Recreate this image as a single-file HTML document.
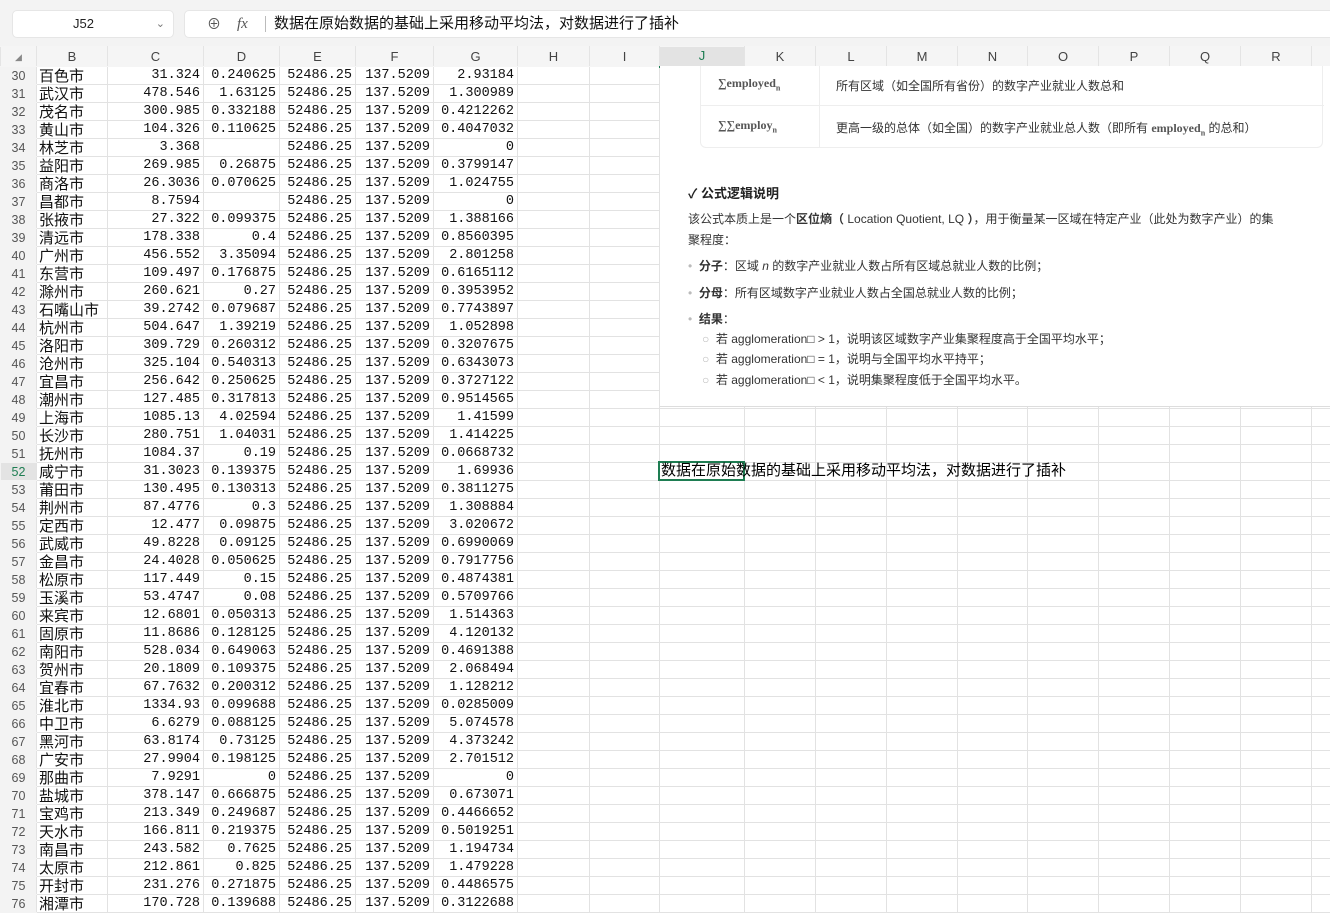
<!DOCTYPE html>
<html><head><meta charset="utf-8"><style>
*{margin:0;padding:0;box-sizing:border-box}
body{width:1330px;height:909px;overflow:hidden;background:#fff;font-family:"Liberation Sans","Noto Sans CJK SC",sans-serif;position:relative}
.top{position:absolute;left:0;top:0;width:1330px;height:46px;background:#f3f3f3}
.nb{position:absolute;left:12px;top:10px;width:162px;height:28px;background:#fff;border-radius:5px;border:1px solid #e6e6e6;font-size:13px;line-height:26px;padding-left:60px;color:#222}
.nb span{position:absolute;right:8px;top:0;color:#777;font-size:11px}
.fb{position:absolute;left:184px;top:10px;width:1160px;height:28px;background:#fff;border-radius:5px;border:1px solid #e6e6e6;font-size:15px;line-height:26px;color:#111}
table{position:absolute;left:0;top:46px;border-collapse:collapse;table-layout:fixed;width:1330px}
td{height:18px;border:1px solid #e2e2e2;font-family:"Liberation Mono","Noto Sans CJK SC",monospace;font-size:13.5px;text-align:right;padding:0 3px;white-space:nowrap;overflow:hidden;line-height:16px;color:#111}
tr.h td{height:20px;background:#f5f5f5;font-family:"Liberation Sans",sans-serif;font-size:13px;color:#444;text-align:center;border-color:#f5f5f5 #e4e4e4}
td.r{background:#f3f3f3;color:#555;text-align:center;font-family:"Liberation Sans",sans-serif;font-size:12.5px;border-color:#f3f3f3;border-right-color:#e2e2e2;padding:0}
td.b{text-align:left;font-family:"Noto Sans CJK SC",sans-serif;font-size:15px;padding-left:2px;line-height:16px}
.ov{position:absolute;left:660px;top:66px;width:670px;height:341px;background:#fff;border-bottom:1px solid #ddd;font-family:"Liberation Sans","Noto Sans CJK SC",sans-serif;color:#333}
.card{position:absolute;left:40px;top:0;width:623px;height:82px;border:1px solid #eee;border-top:none;border-radius:0 0 6px 6px}
.card .l{position:absolute;left:118px;top:0;width:1px;height:82px;background:#eee}
.card .m{position:absolute;left:0;top:39px;width:623px;height:1px;background:#eee}
.t{position:absolute;font-size:12px;white-space:nowrap}
.ser{font-family:"Liberation Serif",serif;font-weight:bold;color:#555}
.sel{position:absolute;left:658px;top:461px;width:87px;height:20px;border:2px solid #1e7d52}
.spill{position:absolute;left:661px;top:461px;font-size:15px;line-height:18px;white-space:nowrap;color:#000;font-family:"Noto Sans CJK SC",sans-serif}
</style></head><body>
<div class="top"></div>
<div class="nb">J52<span>&#8964;</span></div>
<div class="fb"><span style="position:absolute;left:22px;color:#555;font-size:14px">&#8853;</span><span style="position:absolute;left:52px;color:#555;font-style:italic;font-family:'Liberation Serif',serif">fx</span><span style="position:absolute;left:80px;top:5px;width:1px;height:16px;background:#bbb"></span><span style="position:absolute;left:89px">数据在原始数据的基础上采用移动平均法，对数据进行了插补</span></div>
<table>
<colgroup><col style="width:36px"><col style="width:71px"><col style="width:96px"><col style="width:76px"><col style="width:76px"><col style="width:78px"><col style="width:84px"><col style="width:72px"><col style="width:70px"><col style="width:85px"><col style="width:71px"><col style="width:71px"><col style="width:71px"><col style="width:70px"><col style="width:71px"><col style="width:71px"><col style="width:71px"><col style="width:71px"><col style="width:19px"></colgroup>
<tr class="h"><td style="color:#888;font-size:9px">&#9698;</td><td>B</td><td>C</td><td>D</td><td>E</td><td>F</td><td>G</td><td>H</td><td>I</td><td style="background:#e3e3e3;border-bottom:2px solid #1e7d52;color:#1e7d52">J</td><td>K</td><td>L</td><td>M</td><td>N</td><td>O</td><td>P</td><td>Q</td><td>R</td><td></td></tr>
<tr><td class="r">30</td><td class="b">百色市</td><td>31.324</td><td>0.240625</td><td>52486.25</td><td>137.5209</td><td>2.93184</td><td></td><td></td><td></td><td></td><td></td><td></td><td></td><td></td><td></td><td></td><td></td><td></td></tr>
<tr><td class="r">31</td><td class="b">武汉市</td><td>478.546</td><td>1.63125</td><td>52486.25</td><td>137.5209</td><td>1.300989</td><td></td><td></td><td></td><td></td><td></td><td></td><td></td><td></td><td></td><td></td><td></td><td></td></tr>
<tr><td class="r">32</td><td class="b">茂名市</td><td>300.985</td><td>0.332188</td><td>52486.25</td><td>137.5209</td><td>0.4212262</td><td></td><td></td><td></td><td></td><td></td><td></td><td></td><td></td><td></td><td></td><td></td><td></td></tr>
<tr><td class="r">33</td><td class="b">黄山市</td><td>104.326</td><td>0.110625</td><td>52486.25</td><td>137.5209</td><td>0.4047032</td><td></td><td></td><td></td><td></td><td></td><td></td><td></td><td></td><td></td><td></td><td></td><td></td></tr>
<tr><td class="r">34</td><td class="b">林芝市</td><td>3.368</td><td></td><td>52486.25</td><td>137.5209</td><td>0</td><td></td><td></td><td></td><td></td><td></td><td></td><td></td><td></td><td></td><td></td><td></td><td></td></tr>
<tr><td class="r">35</td><td class="b">益阳市</td><td>269.985</td><td>0.26875</td><td>52486.25</td><td>137.5209</td><td>0.3799147</td><td></td><td></td><td></td><td></td><td></td><td></td><td></td><td></td><td></td><td></td><td></td><td></td></tr>
<tr><td class="r">36</td><td class="b">商洛市</td><td>26.3036</td><td>0.070625</td><td>52486.25</td><td>137.5209</td><td>1.024755</td><td></td><td></td><td></td><td></td><td></td><td></td><td></td><td></td><td></td><td></td><td></td><td></td></tr>
<tr><td class="r">37</td><td class="b">昌都市</td><td>8.7594</td><td></td><td>52486.25</td><td>137.5209</td><td>0</td><td></td><td></td><td></td><td></td><td></td><td></td><td></td><td></td><td></td><td></td><td></td><td></td></tr>
<tr><td class="r">38</td><td class="b">张掖市</td><td>27.322</td><td>0.099375</td><td>52486.25</td><td>137.5209</td><td>1.388166</td><td></td><td></td><td></td><td></td><td></td><td></td><td></td><td></td><td></td><td></td><td></td><td></td></tr>
<tr><td class="r">39</td><td class="b">清远市</td><td>178.338</td><td>0.4</td><td>52486.25</td><td>137.5209</td><td>0.8560395</td><td></td><td></td><td></td><td></td><td></td><td></td><td></td><td></td><td></td><td></td><td></td><td></td></tr>
<tr><td class="r">40</td><td class="b">广州市</td><td>456.552</td><td>3.35094</td><td>52486.25</td><td>137.5209</td><td>2.801258</td><td></td><td></td><td></td><td></td><td></td><td></td><td></td><td></td><td></td><td></td><td></td><td></td></tr>
<tr><td class="r">41</td><td class="b">东营市</td><td>109.497</td><td>0.176875</td><td>52486.25</td><td>137.5209</td><td>0.6165112</td><td></td><td></td><td></td><td></td><td></td><td></td><td></td><td></td><td></td><td></td><td></td><td></td></tr>
<tr><td class="r">42</td><td class="b">滁州市</td><td>260.621</td><td>0.27</td><td>52486.25</td><td>137.5209</td><td>0.3953952</td><td></td><td></td><td></td><td></td><td></td><td></td><td></td><td></td><td></td><td></td><td></td><td></td></tr>
<tr><td class="r">43</td><td class="b">石嘴山市</td><td>39.2742</td><td>0.079687</td><td>52486.25</td><td>137.5209</td><td>0.7743897</td><td></td><td></td><td></td><td></td><td></td><td></td><td></td><td></td><td></td><td></td><td></td><td></td></tr>
<tr><td class="r">44</td><td class="b">杭州市</td><td>504.647</td><td>1.39219</td><td>52486.25</td><td>137.5209</td><td>1.052898</td><td></td><td></td><td></td><td></td><td></td><td></td><td></td><td></td><td></td><td></td><td></td><td></td></tr>
<tr><td class="r">45</td><td class="b">洛阳市</td><td>309.729</td><td>0.260312</td><td>52486.25</td><td>137.5209</td><td>0.3207675</td><td></td><td></td><td></td><td></td><td></td><td></td><td></td><td></td><td></td><td></td><td></td><td></td></tr>
<tr><td class="r">46</td><td class="b">沧州市</td><td>325.104</td><td>0.540313</td><td>52486.25</td><td>137.5209</td><td>0.6343073</td><td></td><td></td><td></td><td></td><td></td><td></td><td></td><td></td><td></td><td></td><td></td><td></td></tr>
<tr><td class="r">47</td><td class="b">宜昌市</td><td>256.642</td><td>0.250625</td><td>52486.25</td><td>137.5209</td><td>0.3727122</td><td></td><td></td><td></td><td></td><td></td><td></td><td></td><td></td><td></td><td></td><td></td><td></td></tr>
<tr><td class="r">48</td><td class="b">潮州市</td><td>127.485</td><td>0.317813</td><td>52486.25</td><td>137.5209</td><td>0.9514565</td><td></td><td></td><td></td><td></td><td></td><td></td><td></td><td></td><td></td><td></td><td></td><td></td></tr>
<tr><td class="r">49</td><td class="b">上海市</td><td>1085.13</td><td>4.02594</td><td>52486.25</td><td>137.5209</td><td>1.41599</td><td></td><td></td><td></td><td></td><td></td><td></td><td></td><td></td><td></td><td></td><td></td><td></td></tr>
<tr><td class="r">50</td><td class="b">长沙市</td><td>280.751</td><td>1.04031</td><td>52486.25</td><td>137.5209</td><td>1.414225</td><td></td><td></td><td></td><td></td><td></td><td></td><td></td><td></td><td></td><td></td><td></td><td></td></tr>
<tr><td class="r">51</td><td class="b">抚州市</td><td>1084.37</td><td>0.19</td><td>52486.25</td><td>137.5209</td><td>0.0668732</td><td></td><td></td><td></td><td></td><td></td><td></td><td></td><td></td><td></td><td></td><td></td><td></td></tr>
<tr><td class="r" style="background:#e3e3e3;color:#1e7d52">52</td><td class="b">咸宁市</td><td>31.3023</td><td>0.139375</td><td>52486.25</td><td>137.5209</td><td>1.69936</td><td></td><td></td><td></td><td></td><td></td><td></td><td></td><td></td><td></td><td></td><td></td><td></td></tr>
<tr><td class="r">53</td><td class="b">莆田市</td><td>130.495</td><td>0.130313</td><td>52486.25</td><td>137.5209</td><td>0.3811275</td><td></td><td></td><td></td><td></td><td></td><td></td><td></td><td></td><td></td><td></td><td></td><td></td></tr>
<tr><td class="r">54</td><td class="b">荆州市</td><td>87.4776</td><td>0.3</td><td>52486.25</td><td>137.5209</td><td>1.308884</td><td></td><td></td><td></td><td></td><td></td><td></td><td></td><td></td><td></td><td></td><td></td><td></td></tr>
<tr><td class="r">55</td><td class="b">定西市</td><td>12.477</td><td>0.09875</td><td>52486.25</td><td>137.5209</td><td>3.020672</td><td></td><td></td><td></td><td></td><td></td><td></td><td></td><td></td><td></td><td></td><td></td><td></td></tr>
<tr><td class="r">56</td><td class="b">武威市</td><td>49.8228</td><td>0.09125</td><td>52486.25</td><td>137.5209</td><td>0.6990069</td><td></td><td></td><td></td><td></td><td></td><td></td><td></td><td></td><td></td><td></td><td></td><td></td></tr>
<tr><td class="r">57</td><td class="b">金昌市</td><td>24.4028</td><td>0.050625</td><td>52486.25</td><td>137.5209</td><td>0.7917756</td><td></td><td></td><td></td><td></td><td></td><td></td><td></td><td></td><td></td><td></td><td></td><td></td></tr>
<tr><td class="r">58</td><td class="b">松原市</td><td>117.449</td><td>0.15</td><td>52486.25</td><td>137.5209</td><td>0.4874381</td><td></td><td></td><td></td><td></td><td></td><td></td><td></td><td></td><td></td><td></td><td></td><td></td></tr>
<tr><td class="r">59</td><td class="b">玉溪市</td><td>53.4747</td><td>0.08</td><td>52486.25</td><td>137.5209</td><td>0.5709766</td><td></td><td></td><td></td><td></td><td></td><td></td><td></td><td></td><td></td><td></td><td></td><td></td></tr>
<tr><td class="r">60</td><td class="b">来宾市</td><td>12.6801</td><td>0.050313</td><td>52486.25</td><td>137.5209</td><td>1.514363</td><td></td><td></td><td></td><td></td><td></td><td></td><td></td><td></td><td></td><td></td><td></td><td></td></tr>
<tr><td class="r">61</td><td class="b">固原市</td><td>11.8686</td><td>0.128125</td><td>52486.25</td><td>137.5209</td><td>4.120132</td><td></td><td></td><td></td><td></td><td></td><td></td><td></td><td></td><td></td><td></td><td></td><td></td></tr>
<tr><td class="r">62</td><td class="b">南阳市</td><td>528.034</td><td>0.649063</td><td>52486.25</td><td>137.5209</td><td>0.4691388</td><td></td><td></td><td></td><td></td><td></td><td></td><td></td><td></td><td></td><td></td><td></td><td></td></tr>
<tr><td class="r">63</td><td class="b">贺州市</td><td>20.1809</td><td>0.109375</td><td>52486.25</td><td>137.5209</td><td>2.068494</td><td></td><td></td><td></td><td></td><td></td><td></td><td></td><td></td><td></td><td></td><td></td><td></td></tr>
<tr><td class="r">64</td><td class="b">宜春市</td><td>67.7632</td><td>0.200312</td><td>52486.25</td><td>137.5209</td><td>1.128212</td><td></td><td></td><td></td><td></td><td></td><td></td><td></td><td></td><td></td><td></td><td></td><td></td></tr>
<tr><td class="r">65</td><td class="b">淮北市</td><td>1334.93</td><td>0.099688</td><td>52486.25</td><td>137.5209</td><td>0.0285009</td><td></td><td></td><td></td><td></td><td></td><td></td><td></td><td></td><td></td><td></td><td></td><td></td></tr>
<tr><td class="r">66</td><td class="b">中卫市</td><td>6.6279</td><td>0.088125</td><td>52486.25</td><td>137.5209</td><td>5.074578</td><td></td><td></td><td></td><td></td><td></td><td></td><td></td><td></td><td></td><td></td><td></td><td></td></tr>
<tr><td class="r">67</td><td class="b">黑河市</td><td>63.8174</td><td>0.73125</td><td>52486.25</td><td>137.5209</td><td>4.373242</td><td></td><td></td><td></td><td></td><td></td><td></td><td></td><td></td><td></td><td></td><td></td><td></td></tr>
<tr><td class="r">68</td><td class="b">广安市</td><td>27.9904</td><td>0.198125</td><td>52486.25</td><td>137.5209</td><td>2.701512</td><td></td><td></td><td></td><td></td><td></td><td></td><td></td><td></td><td></td><td></td><td></td><td></td></tr>
<tr><td class="r">69</td><td class="b">那曲市</td><td>7.9291</td><td>0</td><td>52486.25</td><td>137.5209</td><td>0</td><td></td><td></td><td></td><td></td><td></td><td></td><td></td><td></td><td></td><td></td><td></td><td></td></tr>
<tr><td class="r">70</td><td class="b">盐城市</td><td>378.147</td><td>0.666875</td><td>52486.25</td><td>137.5209</td><td>0.673071</td><td></td><td></td><td></td><td></td><td></td><td></td><td></td><td></td><td></td><td></td><td></td><td></td></tr>
<tr><td class="r">71</td><td class="b">宝鸡市</td><td>213.349</td><td>0.249687</td><td>52486.25</td><td>137.5209</td><td>0.4466652</td><td></td><td></td><td></td><td></td><td></td><td></td><td></td><td></td><td></td><td></td><td></td><td></td></tr>
<tr><td class="r">72</td><td class="b">天水市</td><td>166.811</td><td>0.219375</td><td>52486.25</td><td>137.5209</td><td>0.5019251</td><td></td><td></td><td></td><td></td><td></td><td></td><td></td><td></td><td></td><td></td><td></td><td></td></tr>
<tr><td class="r">73</td><td class="b">南昌市</td><td>243.582</td><td>0.7625</td><td>52486.25</td><td>137.5209</td><td>1.194734</td><td></td><td></td><td></td><td></td><td></td><td></td><td></td><td></td><td></td><td></td><td></td><td></td></tr>
<tr><td class="r">74</td><td class="b">太原市</td><td>212.861</td><td>0.825</td><td>52486.25</td><td>137.5209</td><td>1.479228</td><td></td><td></td><td></td><td></td><td></td><td></td><td></td><td></td><td></td><td></td><td></td><td></td></tr>
<tr><td class="r">75</td><td class="b">开封市</td><td>231.276</td><td>0.271875</td><td>52486.25</td><td>137.5209</td><td>0.4486575</td><td></td><td></td><td></td><td></td><td></td><td></td><td></td><td></td><td></td><td></td><td></td><td></td></tr>
<tr><td class="r">76</td><td class="b">湘潭市</td><td>170.728</td><td>0.139688</td><td>52486.25</td><td>137.5209</td><td>0.3122688</td><td></td><td></td><td></td><td></td><td></td><td></td><td></td><td></td><td></td><td></td><td></td><td></td></tr>
</table>
<div class="ov">
<div class="card"><div class="l"></div><div class="m"></div></div>
<div class="t ser" style="left:58px;top:10px;font-size:12px">∑employed<sub style="font-size:8px">n</sub></div>
<div class="t" style="left:176px;top:11px">所有区域（如全国所有省份）的数字产业就业人数总和</div>
<div class="t ser" style="left:58px;top:52px">∑∑employ<sub style="font-size:8px">n</sub></div>
<div class="t" style="left:176px;top:53px">更高一级的总体（如全国）的数字产业就业总人数（即所有 <span class="ser">employed<sub style="font-size:8px">n</sub></span> 的总和）</div>
<div class="t" style="left:28px;top:117px;font-size:13px;font-weight:bold;color:#222">✓ 公式逻辑说明</div>
<div class="t" style="left:28px;top:144px">该公式本质上是一个<b>区位熵（</b> Location Quotient, LQ <b>）</b>，用于衡量某一区域在特定产业（此处为数字产业）的集</div>
<div class="t" style="left:28px;top:165px">聚程度：</div>
<div class="t" style="left:28px;top:191px"><span style="color:#bbb">•</span>&nbsp; <b>分子</b>：区域 <i>n</i> 的数字产业就业人数占所有区域总就业人数的比例；</div>
<div class="t" style="left:28px;top:218px"><span style="color:#bbb">•</span>&nbsp; <b>分母</b>：所有区域数字产业就业人数占全国总就业人数的比例；</div>
<div class="t" style="left:28px;top:244px"><span style="color:#bbb">•</span>&nbsp; <b>结果</b>：</div>
<div class="t" style="left:42px;top:264px"><span style="color:#bbb">○</span>&nbsp; 若 agglomeration□ &gt; 1，说明该区域数字产业集聚程度高于全国平均水平；</div>
<div class="t" style="left:42px;top:284px"><span style="color:#bbb">○</span>&nbsp; 若 agglomeration□ = 1，说明与全国平均水平持平；</div>
<div class="t" style="left:42px;top:305px"><span style="color:#bbb">○</span>&nbsp; 若 agglomeration□ &lt; 1，说明集聚程度低于全国平均水平。</div>
</div>
<div class="sel"></div>
<div class="spill">数据在原始数据的基础上采用移动平均法，对数据进行了插补</div>
</body></html>
